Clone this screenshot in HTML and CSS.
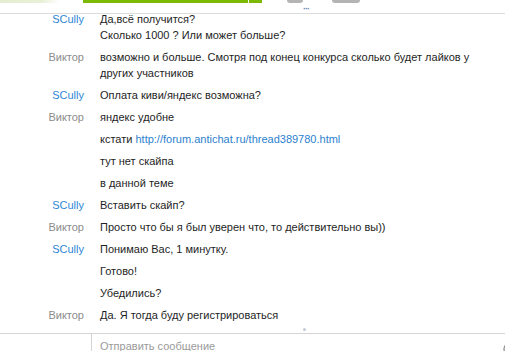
FILE: index.html
```html
<!DOCTYPE html>
<html lang="ru">
<head>
    <meta charset="UTF-8">
    <title>Диалог</title>
    <link rel="stylesheet" href="styles.css">
</head>
<body>
    <div class="window">
        <div class="topbar">
            <span class="bar bar-pale"></span>
            <span class="bar bar-green"></span>
            <span class="bar bar-green-small"></span>
            <span class="bar bar-grey"></span>
            <span class="more">&middot;&middot;&middot;</span>
            <span class="bar bar-grey-wide"></span>
        </div>

        <div class="chat">
            <div class="msg">
                <div class="name scully">SCully</div>
                <div class="text">Да,всё получится?<br>Сколько 1000 ? Или может больше?</div>
            </div>
            <div class="msg">
                <div class="name viktor">Виктор</div>
                <div class="text">возможно и больше. Смотря под конец конкурса сколько будет лайков у других участников</div>
            </div>
            <div class="msg">
                <div class="name scully">SCully</div>
                <div class="text">Оплата киви/яндекс возможна?</div>
            </div>
            <div class="msg">
                <div class="name viktor">Виктор</div>
                <div class="text">яндекс удобне</div>
            </div>
            <div class="msg">
                <div class="name"></div>
                <div class="text">кстати <a href="#">http://forum.antichat.ru/thread389780.html</a></div>
            </div>
            <div class="msg">
                <div class="name"></div>
                <div class="text">тут нет скайпа</div>
            </div>
            <div class="msg">
                <div class="name"></div>
                <div class="text">в данной теме</div>
            </div>
            <div class="msg">
                <div class="name scully">SCully</div>
                <div class="text">Вставить скайп?</div>
            </div>
            <div class="msg">
                <div class="name viktor">Виктор</div>
                <div class="text">Просто что бы я был уверен что, то действительно вы))</div>
            </div>
            <div class="msg">
                <div class="name scully">SCully</div>
                <div class="text">Понимаю Вас, 1 минутку.</div>
            </div>
            <div class="msg">
                <div class="name"></div>
                <div class="text">Готово!</div>
            </div>
            <div class="msg">
                <div class="name"></div>
                <div class="text">Убедились?</div>
            </div>
            <div class="msg">
                <div class="name viktor">Виктор</div>
                <div class="text">Да. Я тогда буду регистрироваться</div>
            </div>
        </div>

        <div class="resize"><span class="grip"></span></div>

        <div class="compose">
            <div class="input">
                <span class="placeholder">Отправить сообщение</span>
                <svg class="smile" width="14" height="14" viewBox="0 0 14 14">
                    <circle cx="7" cy="7" r="6" fill="none" stroke="#8a8a8a" stroke-width="1.2"/>
                    <circle cx="5" cy="5.5" r="0.9" fill="#8a8a8a"/>
                    <circle cx="9" cy="5.5" r="0.9" fill="#8a8a8a"/>
                    <path d="M4.3 8.3 Q7 11 9.7 8.3" fill="none" stroke="#8a8a8a" stroke-width="1.1"/>
                </svg>
            </div>
        </div>
    </div>
</body>
</html>
```

FILE: styles.css
```css
body {
    margin: 0;
    background-color: #ffffff;
    font-family: "Liberation Sans", Arial, sans-serif;
    font-size: 11px;
    color: #1e1e1e;
}

.window {
    width: 505px;
    height: 351px;
    overflow: hidden;
    display: flex;
    flex-direction: column;
    position: relative;
}

/* Tabs strip, lies over the scrolled messages */
.topbar {
    position: absolute;
    top: 0;
    left: 0;
    right: 0;
    height: 13px;
    border-bottom: 1px solid #dcdcdc;
    display: flex;
    align-items: flex-start;
}

.bar {
    display: block;
    height: 3px;
}

.bar-pale {
    width: 60px;
    background: linear-gradient(to right, #e4edd0, #e9f0d8 70%, #ffffff);
}

.bar-green {
    width: 165px;
    margin-left: 23px;
    background-color: #7cb905;
}

.bar-green-small {
    width: 13px;
    margin-left: 1px;
    background-color: #7cb905;
}

.bar-grey {
    width: 16px;
    margin-left: 25px;
    background-color: #b4b4b4;
    border-radius: 0 0 3px 3px;
}

.bar-grey-wide {
    width: 28px;
    margin-left: 19px;
    background-color: #b4b4b4;
    border-radius: 0 0 3px 3px;
}

.more {
    width: 10px;
    font-size: 9px;
    line-height: 9px;
    margin-top: 5px;
    color: #6f88b2;
    letter-spacing: -1px;
    font-weight: bold;
}

/* Messages, scrolled to the bottom */
.chat {
    flex: 1;
    overflow: hidden;
    display: flex;
    flex-direction: column;
    justify-content: flex-end;
}

.msg {
    display: flex;
    padding: 3px 0;
    line-height: 16px;
}

.name {
    width: 84px;
    flex-shrink: 0;
    text-align: right;
}

.scully {
    color: #2d86d6;
}

.viktor {
    color: #8c8c8c;
}

.text {
    margin-left: 16px;
    width: 390px;
}

.text a {
    color: #2b7fcf;
    text-decoration: none;
}

.resize {
    height: 7px;
    flex-shrink: 0;
    display: flex;
    justify-content: center;
    align-items: center;
    padding-left: 103px;
}

.grip {
    width: 3px;
    height: 3px;
    border-radius: 50%;
    background-color: #c3cad8;
}

/* Message input */
.compose {
    height: 17px;
    flex-shrink: 0;
    padding-left: 91px;
    border-top: 1px solid #d4d4d4;
}

.input {
    height: 30px;
    width: 440px;
    border-left: 1px solid #d4d4d4;
    display: flex;
    align-items: flex-start;
    padding-left: 8px;
    padding-top: 6px;
}

.placeholder {
    color: #9a9a9a;
    width: 403px;
}

.smile {
    margin-top: 2px;
}
```
